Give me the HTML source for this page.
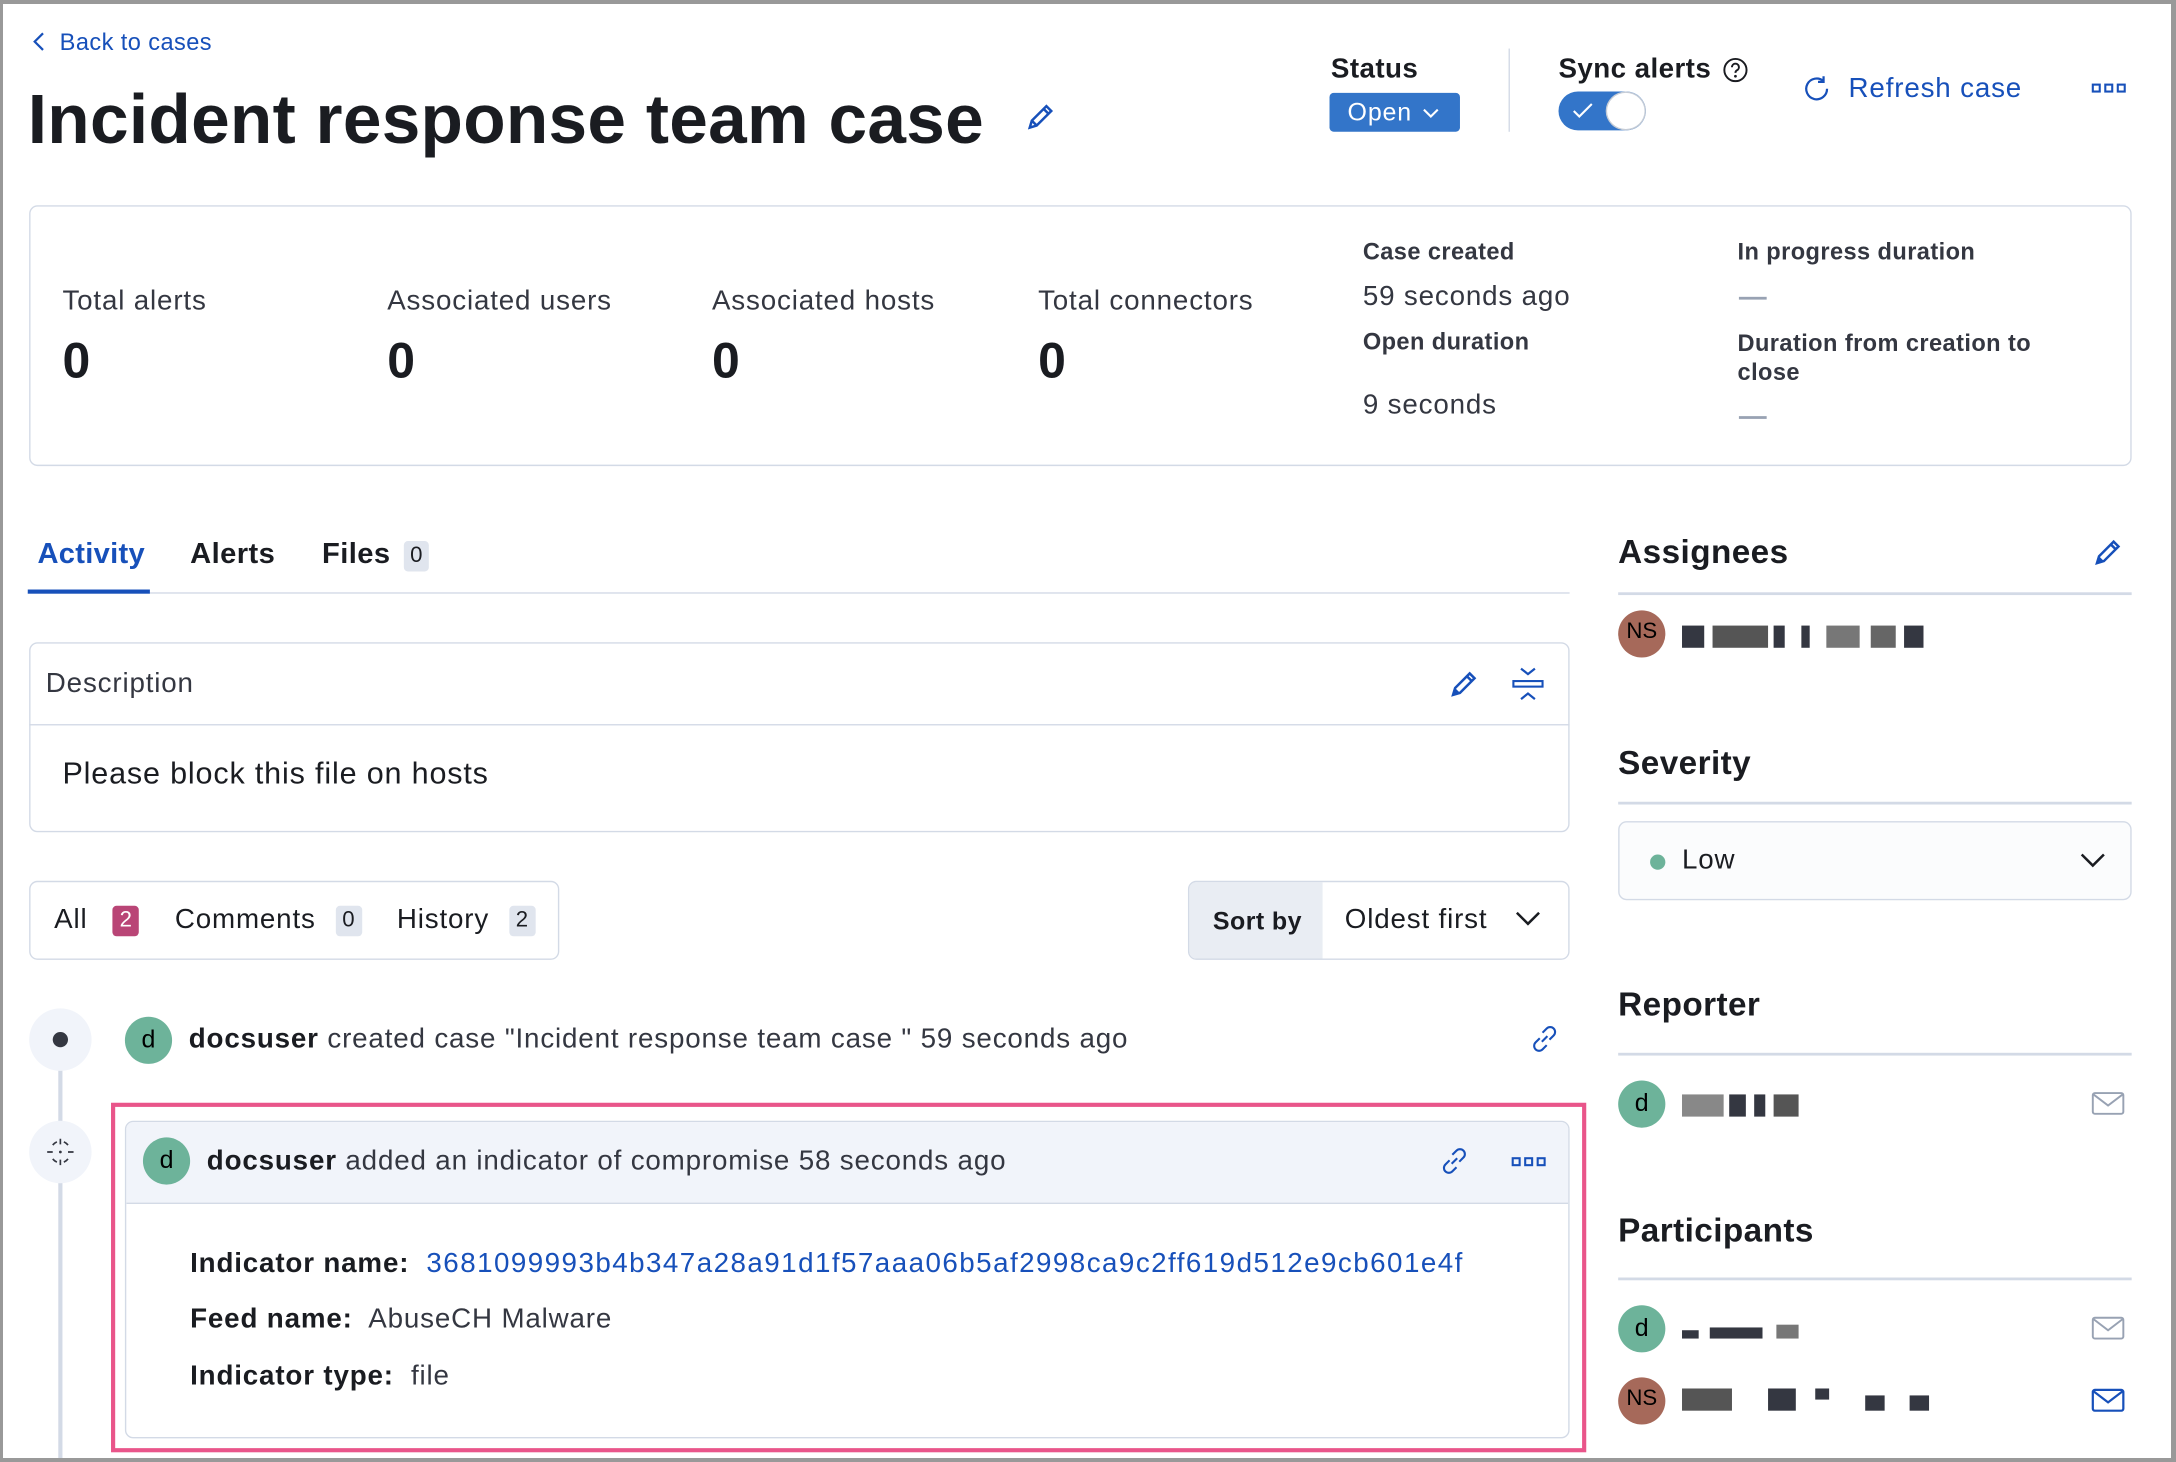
<!DOCTYPE html>
<html><head><meta charset="utf-8"><style>
*{box-sizing:border-box;margin:0;padding:0}
html,body{width:2176px;height:1462px;overflow:hidden;background:#999}
#frame{position:absolute;left:3px;top:4px;width:2168px;height:1454px;background:#fff;overflow:hidden}
#s{position:absolute;left:-3px;top:-4px;width:1568px;height:1054px;transform:scale(1.3878,1.3871);transform-origin:0 0;font-family:"Liberation Sans",sans-serif;color:#343741;letter-spacing:0.6px}
.a{position:absolute;white-space:nowrap}
.b{font-weight:bold;color:#1a1c21;letter-spacing:0.3px}
.blue{color:#1750ba}
.box{position:absolute;border:1px solid #d3dae6;border-radius:6px}
.hr{position:absolute;height:2px;background:#d3dae6}
.av{position:absolute;width:34px;height:34px;border-radius:50%;background:#6db39a;color:#000;font-size:18px;text-align:center;line-height:32px;letter-spacing:0}
.ns{background:#a6695a;font-size:16px}
.badge{display:inline-block;padding:0 5px;border-radius:3px;background:#e0e5ee;font-size:16px;line-height:22px;color:#1a1c21;vertical-align:1px;letter-spacing:0}
.blur{position:absolute;height:16px}
.blur i{position:absolute;top:0;height:16px;background:#343741}
svg{position:absolute}
</style></head><body><div id="frame"><div id="s">

<svg style="left:22px;top:22px" width="12" height="16" viewBox="0 0 12 16"><path d="M9 2L3 8l6 6" fill="none" stroke="#1750ba" stroke-width="1.6"/></svg>
<div class="a blue" style="left:43px;top:21px;font-size:17px;letter-spacing:0.3px">Back to cases</div>
<div class="a b" style="left:20px;top:57px;font-size:50px;letter-spacing:0.2px">Incident response team case</div>
<svg style="left:738px;top:72px" width="24" height="24" viewBox="0 0 24 24"><path d="M4 20l1.5-5L16 4.5l3.5 3.5L9 18.5z M14 6.5l3.5 3.5 M5.5 15l3.5 3.5" fill="none" stroke="#1750ba" stroke-width="1.8"/></svg>

<div class="a b" style="left:959px;top:39px;font-size:20px">Status</div>
<div class="a" style="left:958px;top:67px;width:94px;height:28px;background:#3375c9;border-radius:3px;color:#fff;font-size:18px;line-height:28px;padding-left:13px">Open <svg style="left:66px;top:10px" width="14" height="10" viewBox="0 0 14 10"><path d="M2 2l5 5 5-5" fill="none" stroke="#fff" stroke-width="1.5"/></svg></div>
<div class="a" style="left:1087px;top:35px;width:1px;height:60px;background:#d3dae6"></div>
<div class="a b" style="left:1123px;top:39px;font-size:20px">Sync alerts</div>
<svg style="left:1241px;top:41px" width="19" height="19" viewBox="0 0 19 19"><circle cx="9.5" cy="9.5" r="8" fill="none" stroke="#1a1c21" stroke-width="1.4"/><path d="M7 7.5a2.5 2.5 0 1 1 3.5 2.2c-.8.4-1 .8-1 1.8" fill="none" stroke="#1a1c21" stroke-width="1.4"/><circle cx="9.5" cy="14" r="1" fill="#1a1c21"/></svg>
<div class="a" style="left:1123px;top:66px;width:63px;height:28px;border-radius:14px;background:#3375c9"></div>
<div class="a" style="left:1157px;top:66px;width:29px;height:28px;border-radius:50%;background:#fff;border:1px solid #c5ccd6"></div>
<svg style="left:1131px;top:72px" width="20" height="16" viewBox="0 0 20 16"><path d="M3 8l4 4 9-9" fill="none" stroke="#fff" stroke-width="1.5"/></svg>
<svg style="left:1298px;top:53px" width="22" height="22" viewBox="0 0 22 22"><path d="M16 5.5A7.5 7.5 0 1 0 18.5 11" fill="none" stroke="#1750ba" stroke-width="1.6"/><path d="M16 2v4h-4" fill="none" stroke="#1750ba" stroke-width="1.6"/></svg>
<div class="a blue" style="left:1332px;top:53px;font-size:20px">Refresh case</div>
<svg style="left:1507px;top:60px" width="26" height="8" viewBox="0 0 26 8"><rect x="1" y="1" width="5" height="5" fill="none" stroke="#1750ba" stroke-width="1.5"/><rect x="10" y="1" width="5" height="5" fill="none" stroke="#1750ba" stroke-width="1.5"/><rect x="19" y="1" width="5" height="5" fill="none" stroke="#1750ba" stroke-width="1.5"/></svg>

<div class="box" style="left:21px;top:148px;width:1515px;height:188px;border-width:1.5px"></div>
<div class="a" style="left:45px;top:206px;font-size:20px">Total alerts</div>
<div class="a" style="left:279px;top:206px;font-size:20px">Associated users</div>
<div class="a" style="left:513px;top:206px;font-size:20px">Associated hosts</div>
<div class="a" style="left:748px;top:206px;font-size:20px">Total connectors</div>
<div class="a b" style="left:45px;top:239px;font-size:36px">0</div>
<div class="a b" style="left:279px;top:239px;font-size:36px">0</div>
<div class="a b" style="left:513px;top:239px;font-size:36px">0</div>
<div class="a b" style="left:748px;top:239px;font-size:36px">0</div>
<div class="a b" style="left:982px;top:172px;font-size:17px;color:#343741">Case created</div>
<div class="a" style="left:982px;top:203px;font-size:20px">59 seconds ago</div>
<div class="a b" style="left:982px;top:237px;font-size:17px;color:#343741">Open duration</div>
<div class="a" style="left:982px;top:281px;font-size:20px">9 seconds</div>
<div class="a b" style="left:1252px;top:172px;font-size:17px;color:#343741">In progress duration</div>
<div class="a" style="left:1253px;top:214px;width:20px;height:2px;background:#98a2b3"></div>
<div class="a b" style="left:1252px;top:237px;font-size:17px;color:#343741;line-height:21px">Duration from creation to<br>close</div>
<div class="a" style="left:1253px;top:300px;width:20px;height:2px;background:#98a2b3"></div>

<div class="a" style="left:27px;top:388px;font-size:21px;font-weight:bold;color:#1750ba;letter-spacing:0.2px">Activity</div>
<div class="a b" style="left:137px;top:388px;font-size:21px">Alerts</div>
<div class="a b" style="left:232px;top:388px;font-size:21px">Files <span class="badge" style="font-weight:normal;margin-left:3px">0</span></div>
<div class="hr" style="left:20px;top:427px;width:1111px;height:1px"></div>
<div class="a" style="left:20px;top:425px;width:88px;height:3px;background:#1750ba"></div>

<div class="box" style="left:21px;top:463px;width:1110px;height:137px"></div>
<div class="a" style="left:21px;top:522px;width:1110px;height:1px;background:#d3dae6"></div>
<div class="a" style="left:33px;top:482px;font-size:20px">Description</div>
<svg style="left:1043px;top:481px" width="24" height="24" viewBox="0 0 24 24"><path d="M4 20l1.5-5L16 4.5l3.5 3.5L9 18.5z M14 6.5l3.5 3.5" fill="none" stroke="#1750ba" stroke-width="1.8"/><path d="M4 20l1.5-5 3.5 3.5z" fill="#1750ba"/></svg>
<svg style="left:1089px;top:480px" width="24" height="26" viewBox="0 0 24 26"><path d="M7 2l5 4 5-4 M7 24l5-4 5 4" fill="none" stroke="#1750ba" stroke-width="1.6"/><rect x="1.5" y="11" width="21" height="4" fill="none" stroke="#1750ba" stroke-width="1.5"/></svg>
<div class="a" style="left:45px;top:545px;font-size:22px;color:#1a1c21">Please block this file on hosts</div>

<div class="box" style="left:21px;top:635px;width:382px;height:57px"></div>
<div class="a" style="left:39px;top:652px;font-size:20px;color:#1a1c21">All <span class="badge" style="background:#b94576;color:#fff;margin-left:12px">2</span></div>
<div class="a" style="left:126px;top:652px;font-size:20px;color:#1a1c21">Comments <span class="badge" style="margin-left:8px">0</span></div>
<div class="a" style="left:286px;top:652px;font-size:20px;color:#1a1c21">History <span class="badge" style="margin-left:8px">2</span></div>

<div class="box" style="left:856px;top:635px;width:275px;height:57px;overflow:hidden"><div style="position:absolute;left:0;top:0;width:96px;height:57px;background:#e9edf3"></div></div>
<div class="a b" style="left:874px;top:654px;font-size:18px">Sort by</div>
<div class="a" style="left:969px;top:652px;font-size:20px;color:#1a1c21">Oldest first</div>
<svg style="left:1090px;top:655px" width="22" height="14" viewBox="0 0 22 14"><path d="M3 3l8 8 8-8" fill="none" stroke="#1a1c21" stroke-width="1.8"/></svg>

<div class="a" style="left:42px;top:770px;width:3px;height:290px;background:#d3dae6"></div>
<div class="a" style="left:21px;top:727px;width:45px;height:45px;border-radius:50%;background:#f1f4fa"></div>
<div class="a" style="left:38px;top:744px;width:11px;height:11px;border-radius:50%;background:#343741"></div>
<div class="a" style="left:21px;top:808px;width:45px;height:45px;border-radius:50%;background:#f1f4fa"></div>
<svg style="left:32px;top:819px" width="23" height="23" viewBox="0 0 23 23"><path d="M11.5 2v4 M11.5 17v4 M2 11.5h4 M17 11.5h4 M6 6.5a8 8 0 0 1 3-2.3 M14 4.2a8 8 0 0 1 3 2.3 M17 16.5a8 8 0 0 1-3 2.3 M9 18.8a8 8 0 0 1-3-2.3" fill="none" stroke="#343741" stroke-width="1.2"/><circle cx="11.5" cy="11.5" r="1" fill="#343741"/></svg>

<div class="av" style="left:90px;top:733px">d</div>
<div class="a" style="left:136px;top:738px;font-size:20px;color:#343741"><b style="color:#1a1c21">docsuser</b> created case "Incident response team case " 59 seconds ago</div>
<svg style="left:1101px;top:737px" width="24" height="24" viewBox="0 0 24 24"><path d="M10 14l4-4 M8.5 11.5l-3 3a3.5 3.5 0 0 0 5 5l3-3 M15.5 12.5l3-3a3.5 3.5 0 0 0-5-5l-3 3" fill="none" stroke="#1750ba" stroke-width="1.5"/></svg>

<div class="a" style="left:80px;top:795px;width:1063px;height:252px;border:3px solid #e9558a"></div>
<div class="box" style="left:90px;top:808px;width:1041px;height:229px;overflow:hidden"><div style="height:59px;background:#f1f4fa;border-bottom:1px solid #d3dae6"></div></div>
<div class="av" style="left:103px;top:820px">d</div>
<div class="a" style="left:149px;top:826px;font-size:20px;color:#343741"><b style="color:#1a1c21">docsuser</b> added an indicator of compromise 58 seconds ago</div>
<svg style="left:1036px;top:825px" width="24" height="24" viewBox="0 0 24 24"><path d="M10 14l4-4 M8.5 11.5l-3 3a3.5 3.5 0 0 0 5 5l3-3 M15.5 12.5l3-3a3.5 3.5 0 0 0-5-5l-3 3" fill="none" stroke="#1750ba" stroke-width="1.5"/></svg>
<svg style="left:1089px;top:834px" width="26" height="8" viewBox="0 0 26 8"><rect x="1" y="1" width="5" height="5" fill="none" stroke="#1750ba" stroke-width="1.5"/><rect x="10" y="1" width="5" height="5" fill="none" stroke="#1750ba" stroke-width="1.5"/><rect x="19" y="1" width="5" height="5" fill="none" stroke="#1750ba" stroke-width="1.5"/></svg>
<div class="a" style="left:137px;top:900px;font-size:20px"><b style="color:#1a1c21">Indicator name:</b>&nbsp; <span class="blue" style="letter-spacing:1.05px">3681099993b4b347a28a91d1f57aaa06b5af2998ca9c2ff619d512e9cb601e4f</span></div>
<div class="a" style="left:137px;top:940px;font-size:20px"><b style="color:#1a1c21">Feed name:</b>&nbsp; AbuseCH Malware</div>
<div class="a" style="left:137px;top:981px;font-size:20px"><b style="color:#1a1c21">Indicator type:</b>&nbsp; file</div>

<div class="a b" style="left:1166px;top:385px;font-size:24px">Assignees</div>
<svg style="left:1507px;top:386px" width="24" height="24" viewBox="0 0 24 24"><path d="M4 20l1.5-5L16 4.5l3.5 3.5L9 18.5z M14 6.5l3.5 3.5" fill="none" stroke="#1750ba" stroke-width="1.8"/><path d="M4 20l1.5-5 3.5 3.5z" fill="#1750ba"/></svg>
<div class="hr" style="left:1166px;top:427px;width:370px"></div>
<div class="av ns" style="left:1166px;top:440px">NS</div>
<div class="blur" style="left:1212px;top:451px;width:176px"><i style="left:0;width:16px"></i><i style="left:22px;width:40px;background:#555"></i><i style="left:66px;width:8px"></i><i style="left:86px;width:6px"></i><i style="left:104px;width:24px;background:#777"></i><i style="left:136px;width:18px;background:#666"></i><i style="left:160px;width:14px"></i></div>

<div class="a b" style="left:1166px;top:537px;font-size:24px">Severity</div>
<div class="hr" style="left:1166px;top:578px;width:370px"></div>
<div class="box" style="left:1166px;top:592px;width:370px;height:57px;background:#fbfcfd"></div>
<div class="a" style="left:1189px;top:616px;width:11px;height:11px;border-radius:50%;background:#6db39a"></div>
<div class="a" style="left:1212px;top:609px;font-size:20px;color:#1a1c21">Low</div>
<svg style="left:1497px;top:613px" width="22" height="14" viewBox="0 0 22 14"><path d="M3 3l8 8 8-8" fill="none" stroke="#1a1c21" stroke-width="1.8"/></svg>

<div class="a b" style="left:1166px;top:711px;font-size:24px">Reporter</div>
<div class="hr" style="left:1166px;top:759px;width:370px"></div>
<div class="av" style="left:1166px;top:779px">d</div>
<div class="blur" style="left:1212px;top:789px;width:86px"><i style="left:0;width:30px;background:#888"></i><i style="left:34px;width:12px"></i><i style="left:52px;width:8px"></i><i style="left:66px;width:18px;background:#555"></i></div>
<svg style="left:1507px;top:786px" width="24" height="20" viewBox="0 0 24 20"><rect x="1" y="2" width="22" height="15" rx="1.5" fill="none" stroke="#98a2b3" stroke-width="1.4"/><path d="M1.5 3l10.5 8 10.5-8" fill="none" stroke="#98a2b3" stroke-width="1.4"/></svg>

<div class="a b" style="left:1166px;top:874px;font-size:24px">Participants</div>
<div class="hr" style="left:1166px;top:921px;width:370px"></div>
<div class="av" style="left:1166px;top:941px">d</div>
<div class="blur" style="left:1212px;top:955px;width:86px;height:10px"><i style="left:0;width:12px;height:6px;top:4px"></i><i style="left:20px;width:38px;height:8px;top:2px"></i><i style="left:68px;width:16px;height:10px;background:#777"></i></div>
<svg style="left:1507px;top:948px" width="24" height="20" viewBox="0 0 24 20"><rect x="1" y="2" width="22" height="15" rx="1.5" fill="none" stroke="#98a2b3" stroke-width="1.4"/><path d="M1.5 3l10.5 8 10.5-8" fill="none" stroke="#98a2b3" stroke-width="1.4"/></svg>
<div class="av ns" style="left:1166px;top:993px">NS</div>
<div class="blur" style="left:1212px;top:1001px;width:178px"><i style="left:0;width:36px;background:#555"></i><i style="left:62px;width:20px"></i><i style="left:96px;width:10px;height:8px"></i><i style="left:132px;width:14px;top:5px;height:11px"></i><i style="left:164px;width:14px;top:5px;height:11px"></i></div>
<svg style="left:1507px;top:1000px" width="24" height="20" viewBox="0 0 24 20"><rect x="1" y="2" width="22" height="15" rx="1.5" fill="none" stroke="#1750ba" stroke-width="1.6"/><path d="M1.5 3l10.5 8 10.5-8" fill="none" stroke="#1750ba" stroke-width="1.6"/></svg>

</div></div></body></html>
